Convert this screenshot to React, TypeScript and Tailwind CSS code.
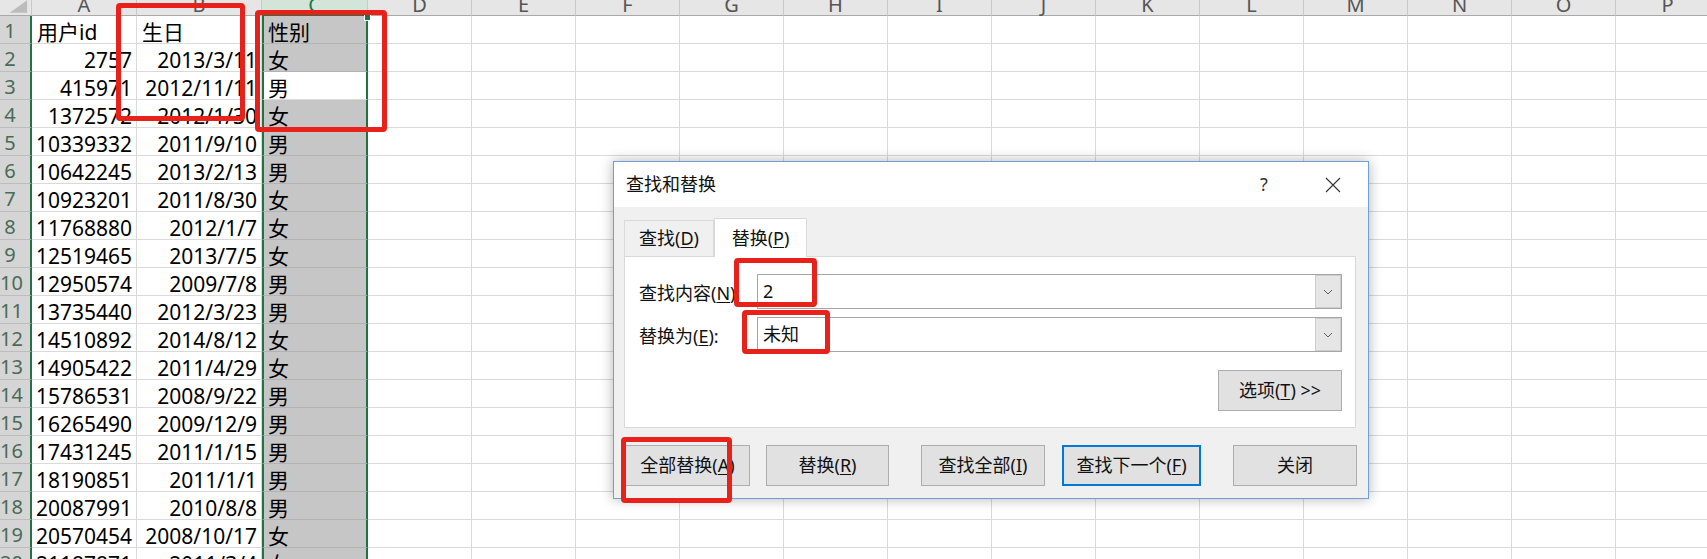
import React from 'react'

const data: string[][] = [
  ['用户id', '生日', '性别'],
  ['2757', '2013/3/11', '女'],
  ['415971', '2012/11/11', '男'],
  ['1372572', '2012/1/30', '女'],
  ['10339332', '2011/9/10', '男'],
  ['10642245', '2013/2/13', '男'],
  ['10923201', '2011/8/30', '女'],
  ['11768880', '2012/1/7', '女'],
  ['12519465', '2013/7/5', '女'],
  ['12950574', '2009/7/8', '男'],
  ['13735440', '2012/3/23', '男'],
  ['14510892', '2014/8/12', '女'],
  ['14905422', '2011/4/29', '女'],
  ['15786531', '2008/9/22', '男'],
  ['16265490', '2009/12/9', '男'],
  ['17431245', '2011/1/15', '男'],
  ['18190851', '2011/1/1', '男'],
  ['20087991', '2010/8/8', '男'],
  ['20570454', '2008/10/17', '女'],
  ['21187871', '2011/3/4', '女'],
]

const rest = ['D', 'E', 'F', 'G', 'H', 'I', 'J', 'K', 'L', 'M', 'N', 'O', 'P']

const Chevron = () => (
  <svg width="10" height="6" viewBox="0 0 10 6">
    <path d="M1 1L5 5L9 1" fill="none" stroke="#606060" strokeWidth="1" />
  </svg>
)

const Combo = ({ label, mn, value }: { label: string; mn: string; value: string }) => (
  <div className="flex h-[35px] items-center">
    <div className="w-[132px] pl-[14px] pt-[3px]">
      {label}(<u className="underline-offset-2">{mn}</u>):
    </div>
    <div className="flex h-full flex-1 border border-[#a6a6a6] bg-white">
      <span className="flex-1 pl-[5px] leading-[33px]">{value}</span>
      <div className="flex w-[26px] items-center justify-center border border-[#cdcdcd] bg-[#e6e6e6]">
        <Chevron />
      </div>
    </div>
  </div>
)

const Btn = ({ children, className }: { children: React.ReactNode; className: string }) => (
  <div className={`flex h-[41px] items-center justify-center bg-[#e1e1e1] ${className}`}>{children}</div>
)

export default function App() {
  return (
    <div className="relative h-[559px] w-[1707px] overflow-hidden bg-white font-['Noto_Sans','Noto_Sans_CJK_SC',sans-serif] text-black">
      {/* column headers */}
      <div className="flex h-[16px] overflow-hidden bg-[#e6e6e6] text-[20px] leading-[10px] text-[#555]">
        <div className="flex w-[32px] shrink-0 border-r border-b border-r-[#c9c9c9] border-b-[#a9a9a9]">
          <svg width="32" height="16" viewBox="0 0 32 16">
            <path d="M28 0L28 13L10 13Z" fill="#bcbcbc" />
          </svg>
        </div>
        <div className="w-[105px] shrink-0 border-r border-b border-r-[#c9c9c9] border-b-[#a9a9a9] text-center">A</div>
        <div className="w-[125px] shrink-0 border-r border-b border-r-[#c9c9c9] border-b-[#a9a9a9] text-center">B</div>
        <div className="w-[106px] shrink-0 border-r border-b-2 border-r-[#c9c9c9] border-b-[#217346] bg-[#d3e5d8] text-center text-[#217346]">C</div>
        {rest.map((c) => (
          <div key={c} className="w-[104px] shrink-0 border-r border-b border-r-[#c9c9c9] border-b-[#a9a9a9] text-center">
            {c}
          </div>
        ))}
      </div>

      {/* rows */}
      {data.map((r, i) => (
        <div key={i} className="flex h-[28px] text-[21px] leading-[28px]">
          <div className="w-[32px] shrink-0 border-r-2 border-b border-r-[#217346] border-b-[#bdbdbd] bg-[#d5d5d5] pr-[10px] pt-[1px] text-center text-[20px] text-[#4a6b57]">
            {i + 1}
          </div>
          <div
            className={`w-[105px] shrink-0 overflow-hidden whitespace-nowrap border-r border-b border-[#dadada] pt-[2px] ${
              i === 0 ? 'pl-[5px] text-left' : 'pr-[4px] text-right'
            }`}
          >
            {r[0]}
          </div>
          <div
            className={`w-[125px] shrink-0 overflow-hidden whitespace-nowrap border-r border-b border-[#dadada] pt-[2px] ${
              i === 0 ? 'pl-[5px] text-left' : 'pr-[4px] text-right'
            }`}
          >
            {r[1]}
          </div>
          <div
            className={`w-[106px] shrink-0 overflow-hidden whitespace-nowrap border-x-2 border-b border-x-[#217346] pl-[4px] pt-[2px] ${
              i === 2 ? 'border-b-[#dadada] bg-white' : 'border-b-[#b3b3b3] bg-[#c6c6c6]'
            }`}
          >
            {r[2]}
          </div>
          {rest.map((c) => (
            <div key={c} className="w-[104px] shrink-0 border-r border-b border-[#dadada]" />
          ))}
        </div>
      ))}

      {/* fill handle */}
      <div className="absolute left-[364px] top-[14px] h-[7px] w-[7px] border border-white bg-[#217346]" />

      {/* find & replace dialog */}
      <div className="absolute left-[613px] top-[161px] flex h-[338px] w-[756px] flex-col border border-[#6ea0d7] bg-[#f0f0f0] text-[18px] text-[#111] shadow-[0_0_12px_rgba(0,0,0,0.3)]">
        <div className="flex h-[45px] shrink-0 items-center bg-white pl-[12px]">
          <span>查找和替换</span>
          <span className="ml-auto mr-[24px] w-[20px] text-center text-[#333]">?</span>
          <span className="flex w-[70px] justify-center">
            <svg width="16" height="16" viewBox="0 0 16 16">
              <path d="M1 1L15 15M15 1L1 15" stroke="#333" strokeWidth="1.1" />
            </svg>
          </span>
        </div>

        <div className="px-[10px] pt-[11px]">
          <div className="flex h-[38px] items-end">
            <div className="flex h-[36px] w-[90px] items-center justify-center border border-b-0 border-[#d9d9d9]">
              查找(<u className="underline-offset-2">D</u>)
            </div>
            <div className="relative z-10 -mb-px flex h-[39px] w-[93px] items-center justify-center border border-b-0 border-[#d9d9d9] bg-white">
              替换(<u className="underline-offset-2">P</u>)
            </div>
          </div>

          <div className="flex h-[172px] w-[732px] flex-col gap-[8px] border border-[#d9d9d9] bg-white pr-[13px] pt-[17px]">
            <Combo label="查找内容" mn="N" value="2" />
            <Combo label="替换为" mn="E" value="未知" />
            <div className="mt-[10px] flex justify-end">
              <Btn className="w-[124px] border border-[#adadad]">
                选项(<u className="underline-offset-2">T</u>) &gt;&gt;
              </Btn>
            </div>
          </div>

          <div className="ml-[1px] mt-[17px] flex">
            <Btn className="w-[125px] border border-[#adadad]">
              全部替换(<u className="underline-offset-2">A</u>)
            </Btn>
            <Btn className="ml-[16px] w-[123px] border border-[#adadad]">
              替换(<u className="underline-offset-2">R</u>)
            </Btn>
            <Btn className="ml-[32px] w-[124px] border border-[#adadad]">
              查找全部(<u className="underline-offset-2">I</u>)
            </Btn>
            <Btn className="ml-[17px] w-[139px] border-2 border-[#0078d7]">
              查找下一个(<u className="underline-offset-2">F</u>)
            </Btn>
            <Btn className="ml-[32px] w-[124px] border border-[#adadad]">关闭</Btn>
          </div>
        </div>
      </div>

      {/* red annotation boxes */}
      <div className="absolute left-[116px] top-[3px] h-[118px] w-[129px] rounded-[4px] border-[5px] border-[#e8221b]" />
      <div className="absolute left-[255px] top-[10px] h-[122px] w-[132px] rounded-[4px] border-[5px] border-[#e8221b]" />
      <div className="absolute left-[734px] top-[258px] h-[49px] w-[83px] rounded-[4px] border-[5px] border-[#e8221b]" />
      <div className="absolute left-[742px] top-[310px] h-[44px] w-[88px] rounded-[4px] border-[5px] border-[#e8221b]" />
      <div className="absolute left-[621px] top-[437px] h-[66px] w-[111px] rounded-[4px] border-[5px] border-[#e8221b]" />
    </div>
  )
}
